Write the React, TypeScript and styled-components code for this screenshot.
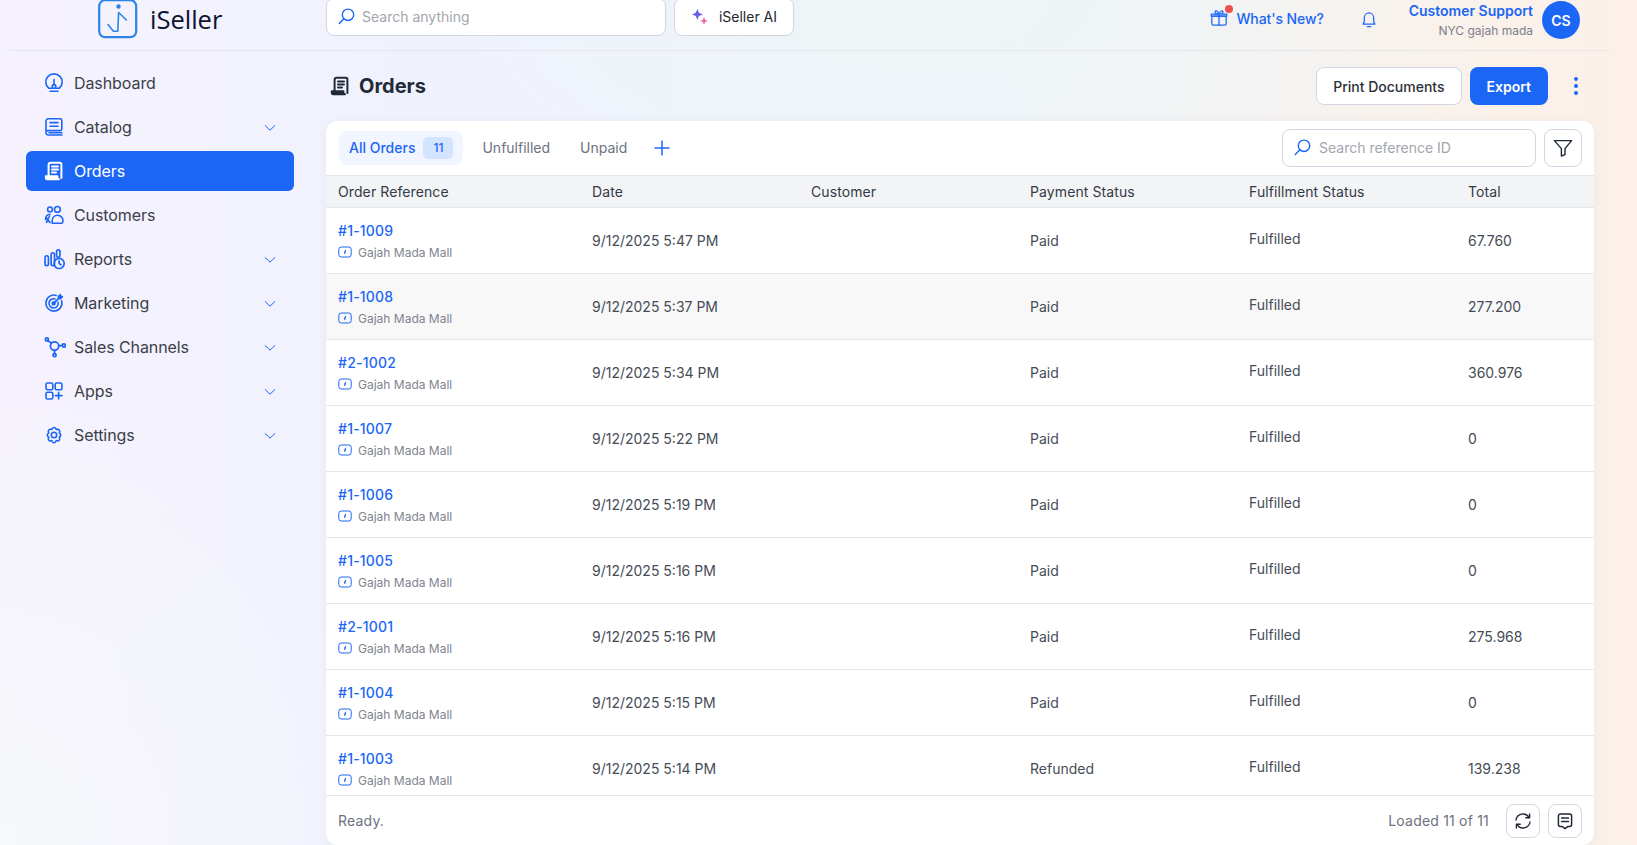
import React from "react";
import styled, { createGlobalStyle } from "styled-components";

const BLUE = "#1c66f5";

const GlobalStyle = createGlobalStyle`
    html, body, #root {
        margin: 0;
        height: 100%;
    }
    body {
        overflow: hidden;
        font-family: "Inter", "Liberation Sans", sans-serif;
        color: #2b3240;
    }
    * {
        box-sizing: border-box;
    }
`;

const orders = [
    { id: "#1-1009", date: "9/12/2025 5:47 PM", payment: "Paid", total: "67.760" },
    { id: "#1-1008", date: "9/12/2025 5:37 PM", payment: "Paid", total: "277.200", hovered: true },
    { id: "#2-1002", date: "9/12/2025 5:34 PM", payment: "Paid", total: "360.976" },
    { id: "#1-1007", date: "9/12/2025 5:22 PM", payment: "Paid", total: "0" },
    { id: "#1-1006", date: "9/12/2025 5:19 PM", payment: "Paid", total: "0" },
    { id: "#1-1005", date: "9/12/2025 5:16 PM", payment: "Paid", total: "0" },
    { id: "#2-1001", date: "9/12/2025 5:16 PM", payment: "Paid", total: "275.968" },
    { id: "#1-1004", date: "9/12/2025 5:15 PM", payment: "Paid", total: "0" },
    { id: "#1-1003", date: "9/12/2025 5:14 PM", payment: "Refunded", total: "139.238" },
];

function Ico({ size = 20, color = BLUE, width = 1.6, children }: { size?: number; color?: string; width?: number; children: React.ReactNode }) {
    return (
        <svg width={size} height={size} viewBox="0 0 20 20" fill="none" stroke={color} strokeWidth={width} strokeLinecap="round" strokeLinejoin="round">
            {children}
        </svg>
    );
}

const DashboardIcon = () => (
    <Ico>
        <path d="M4.6 15.2A8.2 8.2 0 1 1 15.4 15.2" />
        <circle cx="10" cy="13.4" r="1.8" />
        <path d="M10 11.6V6.6M5 15.2H8.2M11.8 15.2H15M6 18.2H14" />
    </Ico>
);
const CatalogIcon = () => (
    <Ico>
        <path d="M2 15V4a2.2 2.2 0 0 1 2.2-2.2H16.2a1.6 1.6 0 0 1 1.6 1.6V12a1.6 1.6 0 0 1-1.6 1.6H3.6A1.6 1.6 0 0 0 2 15.6 2.2 2.2 0 0 0 4.2 18H18" />
        <path d="M6 5.6H14M6 9.2H14M5 15.8H18" />
    </Ico>
);
const ScrollIcon = ({ color = BLUE, width = 2 }: { color?: string; width?: number }) => (
    <Ico color={color} width={width}>
        <path d="M4.6 14.6V4A2.2 2.2 0 0 1 6.8 1.8H15.8A1.6 1.6 0 0 1 17.4 3.4V17" />
        <path d="M8 5.6H14M8 8.6H14M8 11.6H12" />
        <path d="M1.8 15.2H13.4V16.6A1.6 1.6 0 0 0 15 18.2H3.4A1.6 1.6 0 0 1 1.8 16.6Z" fill={color} />
    </Ico>
);
const CustomersIcon = () => (
    <Ico>
        <circle cx="6" cy="4.4" r="2.4" />
        <circle cx="13.4" cy="4.4" r="2.9" />
        <path d="M8.2 18.2H17.4A1.4 1.4 0 0 0 18.8 16.8 5.4 5.4 0 0 0 13.4 10.2 5.4 5.4 0 0 0 8.2 15.4Z" />
        <path d="M1.6 14.4C1.6 11.2 3.2 9.4 6 9.2M2 12.2 6 17.6M5.6 11 2.4 17.4" />
    </Ico>
);
const ReportsIcon = () => (
    <Ico size={21}>
        <rect x="1" y="6.4" width="3.2" height="9.4" rx="1.6" />
        <rect x="6.8" y="3.6" width="3.2" height="12.2" rx="1.6" />
        <rect x="12" y="0.8" width="3.2" height="7" rx="1.6" />
        <circle cx="14.4" cy="13.8" r="4.8" />
        <path d="M14.4 11.2V13.8L16.2 15" />
    </Ico>
);
const MarketingIcon = () => (
    <Ico>
        <path d="M12.2 2.4A8 8 0 1 0 17.6 7.8" />
        <path d="M11 6A4.6 4.6 0 1 0 14 9" />
        <circle cx="9.6" cy="10.4" r="1.4" fill={BLUE} />
        <path d="M9.6 10.4 15.4 4.6M14.4 3.4V5.6H16.6L18.4 3.6H16.4V1.6Z" />
    </Ico>
);
const ChannelsIcon = () => (
    <Ico size={22}>
        <circle cx="2.6" cy="3.2" r="1.4" />
        <circle cx="18" cy="8.6" r="1.4" />
        <circle cx="9.6" cy="17.4" r="1.4" />
        <circle cx="9.6" cy="9.2" r="3.8" />
        <path d="M3.6 4.2 6.8 6.6M13.4 8.8H16.6M9.6 13V16" />
    </Ico>
);
const AppsIcon = () => (
    <Ico>
        <rect x="2" y="2" width="6.8" height="6.8" rx="1.6" />
        <rect x="11.2" y="2" width="6.8" height="6.8" rx="1.6" />
        <rect x="2" y="11.2" width="6.8" height="6.8" rx="1.6" />
        <path d="M14.6 11.2V18M11.2 14.6H18" />
    </Ico>
);
const SettingsIcon = () => (
    <Ico>
        <path d="M8.2 2.1a2 2 0 0 1 3.6 0l.4.8 1-.1a2 2 0 0 1 2 .6 2 2 0 0 1 .4 2l-.3.9.7.7a2 2 0 0 1 0 3l-.7.6.3 1a2 2 0 0 1-2.4 2.6l-1-.2-.4.9a2 2 0 0 1-3.6 0l-.4-.9-1 .2a2 2 0 0 1-2.4-2.6l.3-1-.7-.6a2 2 0 0 1 0-3l.7-.7-.3-.9a2 2 0 0 1 2.4-2.6l1 .1Z" transform="translate(0 1.6)" />
        <circle cx="10" cy="10" r="2.7" />
    </Ico>
);
const SearchIcon = () => (
    <Ico size={19} width={1.5}>
        <circle cx="11.6" cy="8.2" r="6" />
        <path d="M7.2 12.4 2.4 17.4" />
    </Ico>
);
const Chevron = () => (
    <ChevronMark width="12" height="8" viewBox="0 0 12 8" fill="none" stroke={BLUE} strokeWidth="1" strokeLinecap="round" strokeLinejoin="round">
        <path d="M1.2 1.6 6 6.2 10.8 1.6" />
    </ChevronMark>
);

const navItems = [
    { label: "Dashboard", icon: <DashboardIcon /> },
    { label: "Catalog", icon: <CatalogIcon />, more: true },
    { label: "Orders", icon: <ScrollIcon color="#ffffff" />, active: true },
    { label: "Customers", icon: <CustomersIcon /> },
    { label: "Reports", icon: <ReportsIcon />, more: true },
    { label: "Marketing", icon: <MarketingIcon />, more: true },
    { label: "Sales Channels", icon: <ChannelsIcon />, more: true },
    { label: "Apps", icon: <AppsIcon />, more: true },
    { label: "Settings", icon: <SettingsIcon />, more: true },
];

export default function App() {
    return (
        <Page>
            <GlobalStyle />
            <Header>
                <Brand>
                    <svg width="40" height="40" viewBox="0 0 40 40" fill="none" stroke="#2b84ea" strokeLinecap="round" strokeLinejoin="round">
                        <rect x="1.2" y="1.2" width="37" height="37" rx="6" strokeWidth="2.2" />
                        <circle cx="20.5" cy="7.5" r="2.2" fill="#2b84ea" stroke="none" />
                        <path d="M10 25.5 15.4 32.2 19.8 32.2 20.6 13.5 28.4 21" strokeWidth="1.6" />
                    </svg>
                    <BrandName>iSeller</BrandName>
                </Brand>
                <TopSearch>
                    <SearchIcon />
                    <span>Search anything</span>
                </TopSearch>
                <AiButton>
                    <svg width="18" height="18" viewBox="0 0 18 18">
                        <defs>
                            <linearGradient id="spark" x1="0" y1="0" x2="1" y2="1">
                                <stop offset="0" stopColor="#3a63f0" />
                                <stop offset="1" stopColor="#a45fe0" />
                            </linearGradient>
                        </defs>
                        <path d="M6.4 1 8 4.8 12 6.4 8 8 6.4 12 4.8 8 1 6.4 4.8 4.8Z" fill="url(#spark)" />
                        <path d="M13 9 14.1 11.9 17 13 14.1 14.1 13 17 11.9 14.1 9 13 11.9 11.9Z" fill="#ee5fa4" />
                    </svg>
                    iSeller AI
                </AiButton>
                <HeaderRight>
                    <WhatsNew>
                        <GiftWrap>
                            <Ico size={18} width={1.4}>
                                <rect x="2" y="8" width="16" height="10" rx="1.6" />
                                <path d="M1.4 5.8H18.6V8H1.4ZM10 5.8V18M10 5.8C8 5.8 5.6 5 5.6 3.2S8.6 1.4 10 5.8C11.4 1.4 14.4 1.6 14.4 3.2S12 5.8 10 5.8Z" />
                            </Ico>
                            <RedDot />
                        </GiftWrap>
                        What's New?
                    </WhatsNew>
                    <Ico size={18} width={1.4}>
                        <path d="M3.4 14.6C4.4 13.4 4.8 12.2 4.8 10.4V7.4A5.2 5.2 0 0 1 15.2 7.4V10.4C15.2 12.2 15.6 13.4 16.6 14.6Z" />
                        <path d="M8.2 17.4H11.8" />
                    </Ico>
                    <UserBlock>
                        <UserName>Customer Support</UserName>
                        <UserStore>NYC gajah mada</UserStore>
                    </UserBlock>
                    <Avatar>CS</Avatar>
                </HeaderRight>
            </Header>
            <Body>
                <Sidebar>
                    {navItems.map((item) => (
                        <NavItem key={item.label} $active={item.active}>
                            <NavIcon>{item.icon}</NavIcon>
                            <NavLabel>{item.label}</NavLabel>
                            {item.more && <Chevron />}
                        </NavItem>
                    ))}
                </Sidebar>
                <Main>
                    <TitleRow>
                        <ScrollIcon color="#1f2937" />
                        <Title>Orders</Title>
                        <OutlineButton>Print Documents</OutlineButton>
                        <PrimaryButton>Export</PrimaryButton>
                        <Dots>
                            <i />
                            <i />
                            <i />
                        </Dots>
                    </TitleRow>
                    <Card>
                        <Toolbar>
                            <ActiveTab>
                                All Orders
                                <TabCount>11</TabCount>
                            </ActiveTab>
                            <Tab>Unfulfilled</Tab>
                            <Tab>Unpaid</Tab>
                            <AddTab>
                                <svg width="16" height="16" viewBox="0 0 16 16" fill="none" stroke={BLUE} strokeWidth="1.5" strokeLinecap="round">
                                    <path d="M8 1V15M1 8H15" />
                                </svg>
                            </AddTab>
                            <RefSearch>
                                <SearchIcon />
                                <span>Search reference ID</span>
                            </RefSearch>
                            <SquareButton $size={38}>
                                <svg width="20" height="20" viewBox="0 0 20 20" fill="none" stroke="#1f2937" strokeWidth="1.4" strokeLinejoin="round">
                                    <path d="M1.4 2.6H18.6L12 10.6V16.6L8.4 18V10.6Z" />
                                </svg>
                            </SquareButton>
                        </Toolbar>
                        <HeadRow>
                            <span>Order Reference</span>
                            <span>Date</span>
                            <span>Customer</span>
                            <span>Payment Status</span>
                            <span>Fulfillment Status</span>
                            <span>Total</span>
                        </HeadRow>
                        <Rows>
                            {orders.map((o) => (
                                <Row key={o.id} $hovered={o.hovered}>
                                    <RefCell>
                                        <RefLink>{o.id}</RefLink>
                                        <StoreLine>
                                            <svg width="14" height="12" viewBox="0 0 14 12" fill="none" stroke={BLUE} strokeWidth="1">
                                                <rect x="0.8" y="1" width="12.4" height="10" rx="2.4" />
                                                <path d="M7.6 3.8 6.6 8M6 6H8" />
                                            </svg>
                                            Gajah Mada Mall
                                        </StoreLine>
                                    </RefCell>
                                    <Cell>{o.date}</Cell>
                                    <Cell />
                                    <Cell>{o.payment}</Cell>
                                    <FulfillmentCell>Fulfilled</FulfillmentCell>
                                    <Cell>{o.total}</Cell>
                                </Row>
                            ))}
                        </Rows>
                        <Footer>
                            <Ready>Ready.</Ready>
                            <Loaded>Loaded 11 of 11</Loaded>
                            <SquareButton $size={34}>
                                <svg width="18" height="18" viewBox="0 0 18 18" fill="none" stroke="#1f2937" strokeWidth="1.4" strokeLinecap="round" strokeLinejoin="round">
                                    <path d="M2 8A7 7 0 0 1 15 5.6M16 10A7 7 0 0 1 3 12.4" />
                                    <path d="M15.6 2V5.8H11.8M2.4 16V12.2H6.2" />
                                </svg>
                            </SquareButton>
                            <SquareButton $size={34}>
                                <svg width="16" height="18" viewBox="0 0 16 18" fill="none" stroke="#1f2937" strokeWidth="1.5" strokeLinecap="round" strokeLinejoin="round">
                                    <path d="M5 14.4H3.4A2 2 0 0 1 1.4 12.4V4A2 2 0 0 1 3.4 2H12.6A2 2 0 0 1 14.6 4V12.4A2 2 0 0 1 12.6 14.4H11L8 16.6Z" />
                                    <path d="M4.6 6H11.4M4.6 9.4H11.4" />
                                </svg>
                            </SquareButton>
                        </Footer>
                    </Card>
                </Main>
            </Body>
        </Page>
    );
}

const Page = styled.div`
    width: 1637px;
    height: 845px;
    overflow: hidden;
    display: flex;
    flex-direction: column;
    background:
        radial-gradient(480px 220px at 56% 0%, #edf5f5 0%, rgba(237, 245, 245, 0) 100%),
        radial-gradient(420px 460px at 0% 100%, #f6f8fb 0%, rgba(246, 248, 251, 0) 100%),
        linear-gradient(90deg, #f6f2fd 0%, #eff2fd 25%, #eff3fb 60%, #f8f2ec 86%, #fcf0e8 100%);
`;

const Header = styled.header`
    flex: none;
    height: 51px;
    margin: 0 27px 0 10px;
    padding-bottom: 14px;
    display: flex;
    align-items: flex-end;
    border-bottom: 1px solid #e4e6ec;
`;

const Brand = styled.div`
    width: 316px;
    padding-left: 88px;
    margin-bottom: -3px;
    display: flex;
    align-items: center;
    gap: 12px;
`;

const BrandName = styled.span`
    font-family: "Open Sans", "Liberation Sans", sans-serif;
    font-size: 25.5px;
    color: #0d1330;
`;

const TopSearch = styled.div`
    width: 340px;
    height: 38px;
    padding: 0 0 1px 10px;
    display: flex;
    align-items: center;
    gap: 6px;
    background: #fff;
    border: 1px solid #d3d6e2;
    border-radius: 8px;
    font-size: 14px;
    color: #a4a6ad;
`;

const AiButton = styled.div`
    width: 120px;
    height: 38px;
    margin-left: 8px;
    padding-bottom: 1px;
    display: flex;
    align-items: center;
    justify-content: center;
    gap: 10px;
    background: #fff;
    border: 1px solid #d3d6e2;
    border-radius: 8px;
    font-size: 14px;
    color: #22262e;
`;

const HeaderRight = styled.div`
    margin-left: auto;
    margin-right: 30px;
    margin-bottom: -3px;
    display: flex;
    align-items: center;
`;

const WhatsNew = styled.div`
    display: flex;
    align-items: center;
    gap: 8px;
    margin-right: 36px;
    margin-bottom: 4px;
    font-size: 14px;
    font-weight: 500;
    letter-spacing: -0.1px;
    color: ${BLUE};
`;

const GiftWrap = styled.div`
    position: relative;
    display: flex;
`;

const RedDot = styled.div`
    position: absolute;
    top: -4px;
    right: -5px;
    width: 8px;
    height: 8px;
    border-radius: 50%;
    background: #f04d4d;
`;

const UserBlock = styled.div`
    margin-left: 31px;
    margin-right: 9px;
    display: flex;
    flex-direction: column;
    align-items: flex-end;
    gap: 4px;
`;

const UserName = styled.div`
    font-size: 14px;
    line-height: 17px;
    font-weight: 600;
    color: ${BLUE};
`;

const UserStore = styled.div`
    font-size: 12px;
    line-height: 15px;
    color: #7c7f8a;
`;

const Avatar = styled.div`
    width: 38px;
    height: 38px;
    border-radius: 50%;
    display: flex;
    align-items: center;
    justify-content: center;
    background: ${BLUE};
    color: #fff;
    font-size: 14px;
    font-weight: 600;
`;

const Body = styled.div`
    flex: 1;
    min-height: 0;
    display: flex;
`;

const Sidebar = styled.nav`
    flex: none;
    width: 326px;
    padding: 12px 32px 0 26px;
    display: flex;
    flex-direction: column;
    gap: 4px;
`;

const NavItem = styled.div<{ $active?: boolean }>`
    height: 40px;
    padding: 0 18px 0 19px;
    display: flex;
    align-items: center;
    border-radius: 6px;
    background: ${(p) => (p.$active ? BLUE : "transparent")};
    color: ${(p) => (p.$active ? "#fff" : "#3b3f4a")};
`;

const NavIcon = styled.div`
    width: 30px;
    display: flex;
    align-items: center;
    margin-left: -1px;
`;

const NavLabel = styled.span`
    flex: 1;
    font-size: 16px;
    letter-spacing: -0.08px;
`;

const ChevronMark = styled.svg`
    margin-top: 2px;
`;

const Main = styled.main`
    flex: 1;
    min-width: 0;
    padding-right: 43px;
    display: flex;
    flex-direction: column;
`;

const TitleRow = styled.div`
    flex: none;
    height: 70px;
    padding: 0 0 0 4px;
    display: flex;
    align-items: center;
`;

const Title = styled.h1`
    margin: 0 auto 0 9px;
    font-size: 20px;
    font-weight: 700;
    color: #1f2937;
`;

const OutlineButton = styled.div`
    height: 38px;
    padding: 0 16px;
    display: flex;
    align-items: center;
    background: #fff;
    border: 1px solid #d3d6e2;
    border-radius: 8px;
    font-size: 14px;
    font-weight: 500;
    color: #2b2f38;
`;

const PrimaryButton = styled.div`
    height: 38px;
    margin-left: 8px;
    padding: 0 17px;
    display: flex;
    align-items: center;
    background: ${BLUE};
    border-radius: 8px;
    font-size: 14px;
    font-weight: 600;
    color: #fff;
`;

const Dots = styled.div`
    width: 46px;
    margin-right: -5px;
    margin-left: 5px;
    display: flex;
    flex-direction: column;
    align-items: center;
    gap: 3px;
    i {
        width: 4px;
        height: 4px;
        border-radius: 50%;
        background: ${BLUE};
    }
`;

const Card = styled.section`
    flex: 1;
    min-height: 0;
    display: flex;
    flex-direction: column;
    background: #fff;
    border-radius: 12px;
    box-shadow: 0 2px 10px rgba(60, 70, 110, 0.06);
    overflow: hidden;
`;

const Toolbar = styled.div`
    flex: none;
    height: 54px;
    padding: 0 12px 0 13px;
    display: flex;
    align-items: center;
`;

const ActiveTab = styled.div`
    height: 34px;
    padding: 0 10px 1px;
    display: flex;
    align-items: center;
    gap: 8px;
    border-radius: 8px;
    background: #f0f5ff;
    font-size: 14px;
    font-weight: 500;
    color: ${BLUE};
`;

const TabCount = styled.span`
    width: 30px;
    height: 22px;
    display: flex;
    align-items: center;
    justify-content: center;
    border-radius: 5px;
    background: #d3e4fe;
    font-size: 12px;
`;

const Tab = styled.div`
    margin-left: 19px;
    margin-bottom: 1px;
    font-size: 14px;
    color: #6c7280;
    & + & {
        margin-left: 30px;
    }
`;

const AddTab = styled.div`
    margin-left: 27px;
    margin-bottom: 1px;
    display: flex;
`;

const RefSearch = styled.div`
    width: 254px;
    height: 38px;
    margin-left: auto;
    padding: 0 0 1px 10px;
    display: flex;
    align-items: center;
    gap: 7px;
    border: 1px solid #d3d6e2;
    border-radius: 8px;
    font-size: 14px;
    color: #a4a6ad;
`;

const SquareButton = styled.div<{ $size: number }>`
    flex: none;
    width: ${(p) => p.$size}px;
    height: ${(p) => p.$size}px;
    margin-left: 8px;
    display: flex;
    align-items: center;
    justify-content: center;
    background: #fff;
    border: 1px solid #d3d6e2;
    border-radius: 8px;
`;

const columns = "254px 219px 219px 219px 219px 1fr";

const HeadRow = styled.div`
    flex: none;
    height: 33px;
    padding-left: 12px;
    display: grid;
    grid-template-columns: ${columns};
    align-items: center;
    background: #f3f4f6;
    border-top: 1px solid #e5e7eb;
    border-bottom: 1px solid #e5e7eb;
    font-size: 14px;
    letter-spacing: 0.1px;
    color: #343a46;
`;

const Rows = styled.div`
    flex: 1;
    min-height: 0;
    overflow: hidden;
`;

const Row = styled.div<{ $hovered?: boolean }>`
    height: 66px;
    padding-left: 12px;
    display: grid;
    grid-template-columns: ${columns};
    align-items: center;
    background: ${(p) => (p.$hovered ? "#f8f8f8" : "#fff")};
    border-bottom: 1px solid #e5e7eb;
`;

const Cell = styled.div`
    font-size: 14px;
    color: #464c57;
`;

const FulfillmentCell = styled(Cell)`
    padding-bottom: 4px;
`;

const RefCell = styled.div`
    display: flex;
    flex-direction: column;
    gap: 6px;
`;

const RefLink = styled.div`
    font-size: 14px;
    line-height: 17px;
    font-weight: 500;
    letter-spacing: 0.2px;
    color: ${BLUE};
`;

const StoreLine = styled.div`
    display: flex;
    align-items: center;
    gap: 6px;
    font-size: 12px;
    line-height: 15px;
    color: #80838f;
`;

const Footer = styled.div`
    flex: none;
    height: 50px;
    padding: 0 12px;
    display: flex;
    align-items: center;
    border-top: 1px solid #e5e7eb;
    font-size: 14px;
    letter-spacing: 0.2px;
    color: #6c7280;
`;

const Ready = styled.span`
    margin-right: auto;
`;

const Loaded = styled.span`
    margin-right: 9px;
`;
